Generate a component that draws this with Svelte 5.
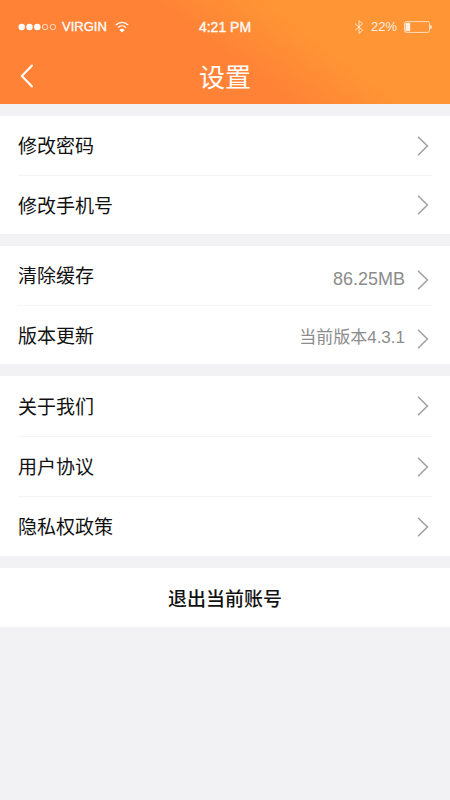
<script lang="ts">
  type Row = { label: string; value?: string; large?: boolean };

  // Settings sections, top to bottom
  const groups: { name: string; rows: Row[] }[] = [
    {
      name: 'account',
      rows: [{ label: '修改密码' }, { label: '修改手机号' }]
    },
    {
      name: 'system',
      rows: [
        { label: '清除缓存', value: '86.25MB', large: true },
        { label: '版本更新', value: '当前版本4.3.1' }
      ]
    },
    {
      name: 'about',
      rows: [{ label: '关于我们' }, { label: '用户协议' }, { label: '隐私权政策' }]
    }
  ];

  const signal = [true, true, true, false, false];
</script>

<div class="page">
  <header>
    <div class="status">
      <div class="carrier">
        <svg width="38" height="10" viewBox="0 0 38 10" aria-hidden="true">
          {#each signal as on, i}
            <circle
              cx={3.7 + i * 7.8}
              cy="5"
              r={on ? 3.2 : 2.7}
              fill={on ? '#fff' : 'none'}
              stroke={on ? 'none' : '#fff'}
              stroke-width="0.7"
            />
          {/each}
        </svg>
        <span>VIRGIN</span>
        <svg class="wifi" width="14" height="12" viewBox="0 0 14 12" aria-hidden="true">
          <path d="M0.7 4.1C4.2 0.4 9.8 0.4 13.3 4.1" fill="none" stroke="#fff" stroke-width="1.3" />
          <path d="M3 6.6C5.3 4.4 8.7 4.4 11 6.6" fill="none" stroke="#fff" stroke-width="1.2" />
          <path d="M4.4 8.9C5.8 7.5 8.2 7.5 9.6 8.9L7 11.4Z" fill="#fff" />
        </svg>
      </div>
      <span class="time">4:21 PM</span>
      <div class="power">
        <svg width="10" height="16" viewBox="0 0 10 16" aria-hidden="true">
          <path d="M1 4.6L8.6 11.2L5 14.4V1.6L8.6 4.8L1 11.4" fill="none" stroke="#fff" stroke-width="0.9" />
        </svg>
        <span>22%</span>
        <svg width="28" height="12" viewBox="0 0 28 12" aria-hidden="true">
          <rect x="0.5" y="0.6" width="25" height="10.8" rx="2" fill="none" stroke="#fff" stroke-width="0.8" />
          <rect x="1.5" y="1.8" width="4.7" height="8.4" fill="#fff" />
          <path d="M26.2 3.8Q27.9 4.8 27.9 6T26.2 8.2Z" fill="#fff" />
        </svg>
      </div>
    </div>
    <div class="navbar">
      <button class="back" aria-label="返回">
        <svg width="14" height="24" viewBox="0 0 14 24" aria-hidden="true">
          <path d="M12 1.5L1.8 12L12 22.5" fill="none" stroke="#fff" stroke-width="2.1" stroke-linecap="round" stroke-linejoin="round" />
        </svg>
      </button>
      <h1>设置</h1>
    </div>
  </header>

  <main>
    {#each groups as group}
      <ul class={group.name}>
        {#each group.rows as row}
          <li>
            <button class="row">
              <span class="label">{row.label}</span>
              <span class="detail">
                {#if row.value}
                  <span class="value" class:large={row.large}>{row.value}</span>
                {/if}
                <svg width="12" height="20" viewBox="0 0 12 20" aria-hidden="true">
                  <path d="M1 0.8L10.4 10L1 19.2" fill="none" stroke="#a3a3a3" stroke-width="1.6" />
                </svg>
              </span>
            </button>
          </li>
        {/each}
      </ul>
    {/each}
    <button class="logout">退出当前账号</button>
  </main>
</div>

<style>
  :global(body) {
    margin: 0;
    background: #f2f2f4;
  }

  .page {
    font-family: 'Liberation Sans', 'Noto Sans CJK SC', sans-serif;
    color: #111;
  }

  button {
    margin: 0;
    padding: 0;
    border: 0;
    background: none;
    font: inherit;
    color: inherit;
    cursor: pointer;
  }

  svg {
    display: block;
    flex: none;
  }

  /* Header */
  header {
    height: 104px;
    box-sizing: border-box;
    padding-top: 16px;
    color: #fff;
    background: linear-gradient(37deg, #ff8236 49%, #ff9535 68%);
  }

  .status {
    display: grid;
    grid-template-columns: 1fr auto 1fr;
    align-items: center;
    height: 20px;
    padding: 0 18px;
    font-size: 13px;
    line-height: 22px;
  }

  .carrier,
  .power {
    display: flex;
    align-items: center;
  }

  .carrier {
    gap: 6px;
    -webkit-text-stroke: 0.3px #fff;
  }

  .wifi {
    margin-left: 2px;
  }

  .time {
    font-size: 14px;
    -webkit-text-stroke: 0.3px #fff;
  }

  .power {
    justify-content: flex-end;
    gap: 7px;
    opacity: 0.85;
  }

  .navbar {
    display: grid;
    grid-template-columns: 48px 1fr 48px;
    align-items: center;
    height: 80px;
  }

  .back {
    justify-self: start;
    padding-left: 20px;
  }

  h1 {
    margin: 0;
    padding-top: 4px;
    font-size: 26px;
    line-height: 40px;
    font-weight: 400;
    text-align: center;
  }

  /* Sections */
  main {
    display: flex;
    flex-direction: column;
    gap: 12px;
    padding: 12px 0;
  }

  ul {
    margin: 0;
    padding: 0 18px;
    list-style: none;
    background: #fff;
  }

  .row {
    display: flex;
    align-items: center;
    justify-content: space-between;
    width: 100%;
    height: 59px;
    text-align: left;
  }

  .about .row {
    height: 60px;
  }

  li + li .row {
    border-top: 1px solid #f4f4f5;
  }

  .label {
    padding-top: 3px;
    font-size: 19px;
    line-height: 28px;
  }

  .detail {
    display: flex;
    align-items: center;
    gap: 12px;
    padding-right: 3px;
  }

  .system .detail {
    padding-top: 8px;
  }

  .value {
    margin-top: -2px;
    font-size: 17px;
    line-height: 24px;
    color: #8c8c8c;
  }

  .large {
    font-size: 18px;
  }

  .logout {
    height: 59px;
    background: #fff;
    font-size: 19px;
    font-weight: 500;
    text-align: center;
  }
</style>
